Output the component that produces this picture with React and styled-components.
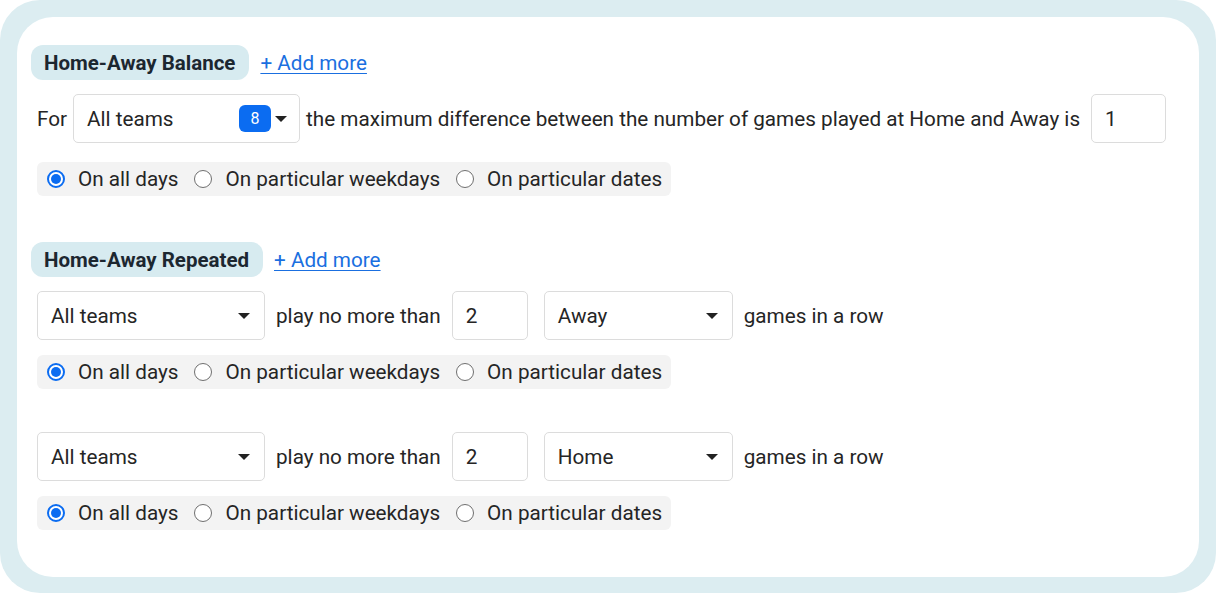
import React from "react";
import styled, { createGlobalStyle } from "styled-components";

const Global = createGlobalStyle`
  html, body { margin: 0; padding: 0; background: #ffffff; }
  body { font-family: Roboto, "Liberation Sans", sans-serif; color: #222; }
`;

const FS = "20.7px";

const Frame = styled.div`
  width: 1216px;
  height: 593px;
  box-sizing: border-box;
  background: #dcedf1;
  border-radius: 40px;
  padding: 17px 17px 16px 17px;
`;

const Card = styled.div`
  height: 100%;
  box-sizing: border-box;
  background: #ffffff;
  border-radius: 36px;
  padding: 28px 20px 0 20px;
  display: flex;
  flex-direction: column;
`;

const Section = styled.section`
  display: flex;
  flex-direction: column;
  margin-top: ${(p) => p.$mt || 0}px;
`;

const Header = styled.div`
  display: flex;
  align-items: center;
  gap: 11px;
  margin-left: -6px;
  height: 35px;
`;

const Tag = styled.span`
  display: inline-flex;
  align-items: center;
  height: 35px;
  padding: 0 14px 0 13px;
  background: #d7ebf0;
  border-radius: 12px;
  font-size: 20.5px;
  font-weight: 700;
  color: #1c2730;
`;

const AddLink = styled.a`
  font-size: ${FS};
  color: #1a6fe0;
  text-decoration: underline;
  text-underline-offset: 3px;
  text-decoration-thickness: 1px;
  cursor: pointer;
`;

const Row = styled.div`
  display: flex;
  align-items: center;
  gap: ${(p) => p.$gap || 11}px;
  margin-top: ${(p) => p.$mt || 0}px;
  font-size: ${FS};
  color: #252525;
`;

const Label = styled.span`
  white-space: nowrap;
`;

const Select = styled.div`
  display: flex;
  align-items: center;
  width: ${(p) => p.$w}px;
  height: 49px;
  box-sizing: border-box;
  border: 1px solid #dcdcdc;
  border-radius: 5px;
  padding: 0 ${(p) => p.$pr || 14}px 0 13px;
  margin-left: ${(p) => p.$ml || 0}px;
  background: #fff;
  font-size: ${FS};
  color: #252525;
`;

const SelectText = styled.span`
  flex: 1;
`;

const Badge = styled.span`
  display: inline-flex;
  align-items: center;
  justify-content: center;
  width: 32px;
  height: 27px;
  border-radius: 6px;
  background: #0b6cf1;
  color: #fff;
  font-size: 16px;
  margin-right: 4px;
`;

const Caret = styled.span`
  width: 0;
  height: 0;
  border-left: 6px solid transparent;
  border-right: 6px solid transparent;
  border-top: 6px solid #222;
`;

const NumInput = styled.div`
  display: flex;
  align-items: center;
  width: ${(p) => p.$w || 76}px;
  height: 49px;
  box-sizing: border-box;
  border: 1px solid #dcdcdc;
  border-radius: 5px;
  padding-left: 13px;
  margin-left: ${(p) => p.$ml || 0}px;
  font-size: ${FS};
  color: #252525;
`;

const RadioGroup = styled.div`
  display: inline-flex;
  align-self: flex-start;
  align-items: center;
  height: 34px;
  padding: 0 9px 0 10px;
  background: #f3f3f3;
  border-radius: 6px;
  margin-top: ${(p) => p.$mt || 0}px;
  gap: 16px;
`;

const RadioItem = styled.label`
  display: inline-flex;
  align-items: center;
  gap: 13px;
  font-size: ${FS};
  color: #252525;
`;

const RadioDot = styled.span`
  width: 18px;
  height: 18px;
  box-sizing: border-box;
  border-radius: 50%;
  border: ${(p) => (p.$on ? "2px solid #0b6cf1" : "1.5px solid #6f6f6f")};
  background: #fff;
  display: inline-flex;
  align-items: center;
  justify-content: center;
  &::after {
    content: "";
    display: ${(p) => (p.$on ? "block" : "none")};
    width: 10px;
    height: 10px;
    border-radius: 50%;
    background: #0b6cf1;
  }
`;

const Radios = ({ mt }) => (
  <RadioGroup $mt={mt}>
    <RadioItem>
      <RadioDot $on />
      On all days
    </RadioItem>
    <RadioItem>
      <RadioDot />
      On particular weekdays
    </RadioItem>
    <RadioItem>
      <RadioDot />
      On particular dates
    </RadioItem>
  </RadioGroup>
);

const RepeatRow = ({ mt, value }) => (
  <Row $mt={mt}>
    <Select $w={228}>
      <SelectText>All teams</SelectText>
      <Caret />
    </Select>
    <Label>play no more than</Label>
    <NumInput>2</NumInput>
    <Select $w={189} $ml={5}>
      <SelectText>{value}</SelectText>
      <Caret />
    </Select>
    <Label>games in a row</Label>
  </Row>
);

export default function App() {
  return (
    <>
      <Global />
      <Frame>
        <Card>
          <Section>
            <Header>
              <Tag>Home-Away Balance</Tag>
              <AddLink>+ Add more</AddLink>
            </Header>
            <Row $mt={14} $gap={6}>
              <Label>For</Label>
              <Select $w={227} $pr={12}>
                <SelectText>All teams</SelectText>
                <Badge>8</Badge>
                <Caret />
              </Select>
              <Label>
                the maximum difference between the number of games played at Home and Away is
              </Label>
              <NumInput $w={75} $ml={5}>1</NumInput>
            </Row>
            <Radios mt={19} />
          </Section>
          <Section $mt={46}>
            <Header>
              <Tag>Home-Away Repeated</Tag>
              <AddLink>+ Add more</AddLink>
            </Header>
            <RepeatRow mt={14} value="Away" />
            <Radios mt={15} />
            <RepeatRow mt={43} value="Home" />
            <Radios mt={15} />
          </Section>
        </Card>
      </Frame>
    </>
  );
}
